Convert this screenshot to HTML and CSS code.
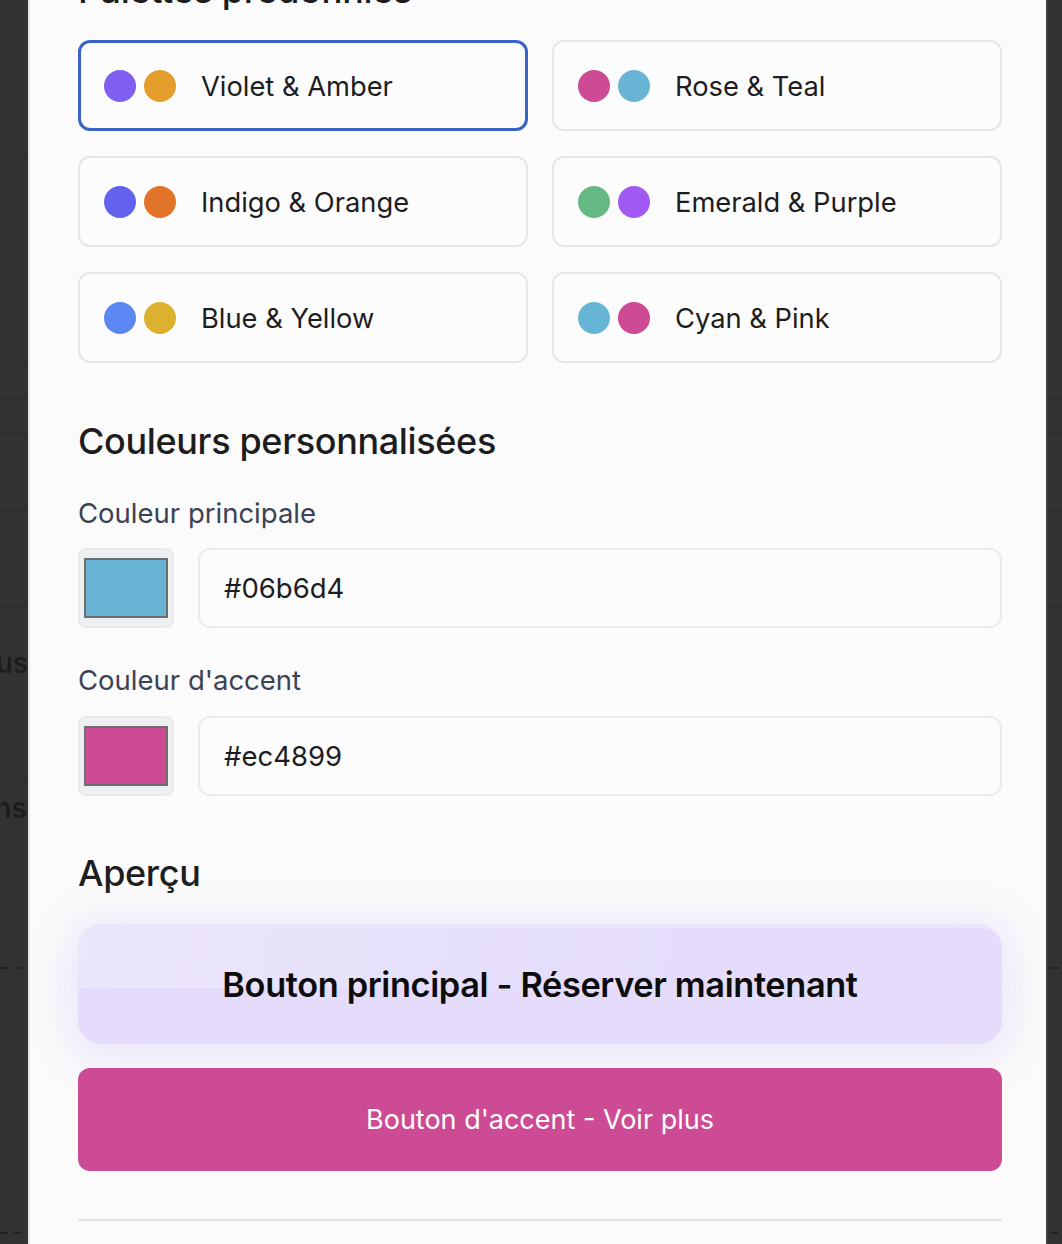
FILE: index.html
```html
<!DOCTYPE html>
<html lang="fr">
<head>
<meta charset="utf-8">
<title>Palettes</title>
<link rel="stylesheet" href="styles.css">
</head>
<body>
<div class="backdrop">
  <div class="bg-page">
    <div class="bg-row bg-r1"></div>
    <div class="bg-row bg-r2"></div>
    <div class="bg-row bg-r3"></div>
    <div class="bg-row bg-r4"></div>
    <div class="bg-row bg-r5"></div>
    <div class="bg-row bg-r6"></div>
    <div class="bg-text bg-t1">Vous</div>
    <div class="bg-text bg-t2">Options</div>
    <div class="bg-row bg-r7"></div>
    <div class="bg-dash bg-d1"></div>
    <div class="bg-dash bg-d2"></div>
  </div>
</div>
<div class="modal">
  <h2 class="section-title top-title">Palettes prédéfinies</h2>
  <div class="palette-grid">
    <button class="palette selected"><span class="dot" style="background:#7f5ff0"></span><span class="dot" style="background:#e39e2c"></span><span class="palette-name">Violet &amp; Amber</span></button>
    <button class="palette"><span class="dot" style="background:#cc4b94"></span><span class="dot" style="background:#68b4d4"></span><span class="palette-name">Rose &amp; Teal</span></button>
    <button class="palette"><span class="dot" style="background:#6362ee"></span><span class="dot" style="background:#e17429"></span><span class="palette-name">Indigo &amp; Orange</span></button>
    <button class="palette"><span class="dot" style="background:#66b882"></span><span class="dot" style="background:#a05af2"></span><span class="palette-name">Emerald &amp; Purple</span></button>
    <button class="palette"><span class="dot" style="background:#5b87f3"></span><span class="dot" style="background:#dcb130"></span><span class="palette-name">Blue &amp; Yellow</span></button>
    <button class="palette"><span class="dot" style="background:#67b5d4"></span><span class="dot" style="background:#cc4b94"></span><span class="palette-name">Cyan &amp; Pink</span></button>
  </div>

  <h2 class="section-title">Couleurs personnalisées</h2>
  <div class="field">
    <label class="field-label">Couleur principale</label>
    <div class="field-row">
      <div class="swatch-box"><span class="swatch" style="background:#68b4d4"></span></div>
      <div class="text-input">#06b6d4</div>
    </div>
  </div>
  <div class="field">
    <label class="field-label">Couleur d'accent</label>
    <div class="field-row">
      <div class="swatch-box"><span class="swatch" style="background:#cc4b94"></span></div>
      <div class="text-input">#ec4899</div>
    </div>
  </div>

  <h2 class="section-title preview-title">Aperçu</h2>
  <button class="btn-primary"><span class="btn-label">Bouton principal - Réserver maintenant</span></button>
  <button class="btn-accent">Bouton d'accent - Voir plus</button>
  <hr class="divider">
</div>
</body>
</html>
```

FILE: styles.css
```css
* { box-sizing: border-box; }
html, body { margin: 0; height: 100%; }
body {
  background: #323232;
  font-family: Inter, "Noto Sans", "Liberation Sans", sans-serif;
  color: #1d1d1f;
  overflow: hidden;
}
.backdrop {
  position: fixed;
  inset: 0;
  z-index: 0;
}
.bg-page { position: relative; width: 100%; height: 100%; }
.bg-row { position: absolute; left: 0; right: 0; height: 1px; background: #2b2b2b; }
.bg-r1 { top: 157px; }
.bg-r2 { top: 364px; }
.bg-r3 { top: 398px; }
.bg-r4 { top: 432px; }
.bg-r5 { top: 511px; }
.bg-r6 { top: 607px; }
.bg-r7 { top: 780px; }
.bg-text {
  position: absolute;
  font-size: 28px;
  color: #1c1c1c;
  font-weight: 500;
}
.bg-t1 { top: 646px; right: 1034px; }
.bg-t2 { top: 791px; right: 1035px; font-weight: 600; }
.bg-dash {
  position: absolute; left: 0; right: 0; height: 2px;
  background: repeating-linear-gradient(90deg, #222 0 8px, transparent 8px 14px);
}
.bg-d1 { top: 967px; }
.bg-d2 { top: 1232px; }

.modal {
  position: relative;
  z-index: 1;
  margin-left: 28px;
  width: 1020px;
  height: 1244px;
  background: #fbfbfb;
  border-left: 2px solid #e7e7ec;
  border-right: 2px solid #3e3e3e;
  padding: 0 44px 0 48px;
  overflow: hidden;
}
.section-title {
  margin: 0;
  font-size: 36px;
  font-weight: 500;
  letter-spacing: -0.35px;
  color: #1d1d1f;
  line-height: 44px;
}
.top-title { margin-top: -32px; }
.palette-grid {
  margin-top: 28px;
  display: grid;
  grid-template-columns: 1fr 1fr;
  column-gap: 24px;
  row-gap: 25px;
}
.palette {
  height: 91px;
  display: flex;
  align-items: center;
  gap: 8px;
  padding: 0 24px;
  background: #fcfcfc;
  border: 2px solid #e6e6ea;
  border-radius: 12px;
  font: inherit;
  cursor: pointer;
  text-align: left;
}
.palette.selected {
  border: 3px solid #3a63c8;
  padding-left: 23px;
}
.dot {
  width: 32px;
  height: 32px;
  border-radius: 50%;
  flex: none;
}
.palette-name {
  margin-left: 17px;
  font-size: 27.3px;
  line-height: 34px;
  padding-top: 2px;
  color: #1d1d1f;
}
.palette-grid + .section-title { margin-top: 56px; }
.field { margin-top: 33px; }
.field + .field { margin-top: 35px; }
.field-label {
  display: block;
  font-size: 27.5px;
  color: #3b4254;
  line-height: 34px;
}
.field-row {
  margin-top: 18px;
  display: flex;
  gap: 24px;
}
.field + .field .field-row { margin-top: 19px; }
.swatch-box {
  width: 96px;
  height: 80px;
  flex: none;
  background: #eeeff1;
  border: 2px solid #e8e9ec;
  border-radius: 8px;
  display: flex;
  align-items: center;
  justify-content: center;
}
.swatch {
  width: 84px;
  height: 60px;
  border: 2px solid #6e6e6e;
}
.text-input {
  flex: 1;
  height: 80px;
  background: #fcfcfc;
  border: 2px solid #ececef;
  border-radius: 12px;
  padding: 0 24px;
  display: flex;
  align-items: center;
  font-size: 27.5px;
  color: #1d1d1f;
}
.preview-title { margin-top: 55px; }
.btn-primary {
  position: relative;
  display: block;
  width: 100%;
  margin-top: 29px;
  height: 120px;
  border: none;
  border-radius: 24px;
  background: #e4dcfa;
  box-shadow: 0 6px 40px 10px rgba(214, 204, 250, 0.45);
  font: inherit;
  font-size: 34.3px;
  font-weight: 600;
  color: #0c0c0c;
  letter-spacing: -0.35px;
  cursor: pointer;
  overflow: hidden;
}
.btn-primary::before {
  content: "";
  position: absolute;
  left: 0;
  right: 0;
  top: 0;
  height: 60px;
  border-top: 4px solid #ebe6fc;
  border-radius: 24px 24px 0 0;
  background: linear-gradient(100deg, rgba(255,255,255,0.28) 0%, rgba(255,255,255,0.08) 45%, rgba(255,255,255,0) 70%);
}
.btn-label { position: relative; }
.btn-accent {
  position: relative;
  display: block;
  width: 100%;
  margin-top: 24px;
  height: 103px;
  border: none;
  border-radius: 12px;
  background: #cc4b94;
  font: inherit;
  font-size: 27px;
  color: #ffffff;
  cursor: pointer;
}
.divider {
  margin: 48px 0 0;
  border: none;
  height: 2px;
  background: #e3e3e7;
}
```
